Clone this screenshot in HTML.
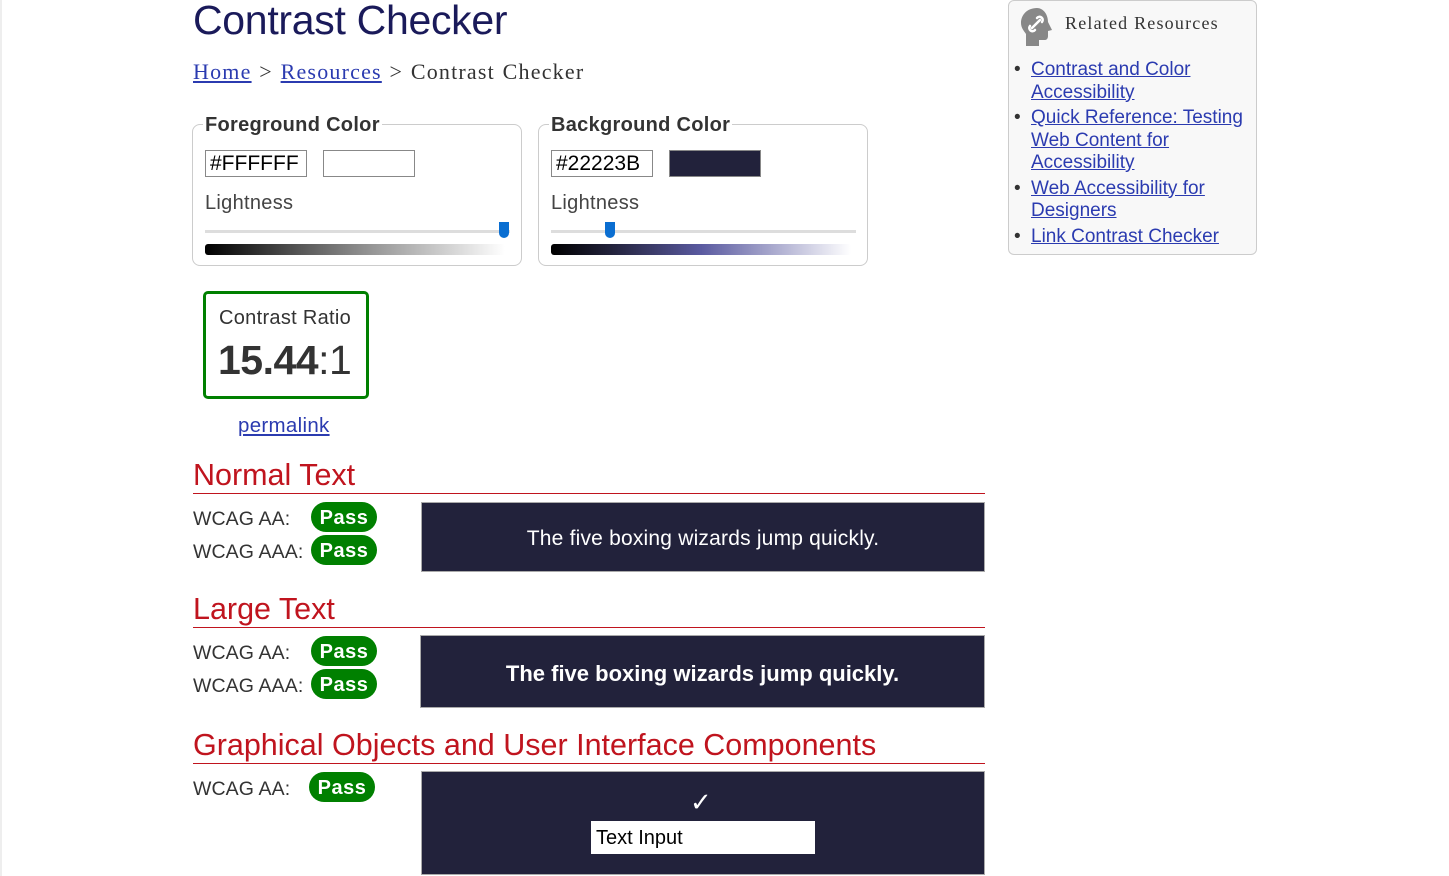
<!DOCTYPE html>
<html><head><meta charset="utf-8"><style>
*{box-sizing:border-box;margin:0;padding:0}
body{width:1449px;height:876px;overflow:hidden;background:#fff;font-family:"Liberation Sans",sans-serif;position:relative;color:#333}
.a{position:absolute}
a{color:#2b3bb0;text-decoration:underline}
.edge{left:0;top:0;width:2px;height:876px;background:#eee}
h1{position:absolute;left:193px;top:-3px;font-weight:normal;font-size:41px;color:#1a1a5a;letter-spacing:-0.3px}
.crumb{left:193px;top:59px;font-family:"Liberation Serif",serif;font-size:22px;color:#333;letter-spacing:1.2px;word-spacing:1px}
.fs{border:1px solid #ccc;border-radius:8px;width:330px;height:142px;top:124px}
.leg{font-weight:bold;font-size:20px;color:#333;background:#fff;padding:0 2px;top:114px;letter-spacing:0.3px}
.inp{border:1px solid #888;height:27px;font-size:21px;color:#000;padding-left:4px;line-height:25px}
.lt{font-size:20px;color:#444;letter-spacing:0.3px}
.track{height:3px;background:#ddd}
.thumb{width:10px;height:16px;background:#0a6ed1;border-radius:0 0 5px 5px}
.grad{height:11px;border-radius:3px}
h2{position:absolute;left:193px;font-weight:normal;font-size:30.5px;color:#c0141e;width:792px;border-bottom:1px solid #c0141e;line-height:36px;letter-spacing:0px}
.w{left:193px;font-size:19.5px;color:#333;letter-spacing:0.1px}
.pass{background:#008000;color:#fff;font-weight:bold;font-size:20px;border-radius:15px;width:66px;height:30px;line-height:32px;text-align:center;letter-spacing:0.5px}
.demo{background:#22223b;color:#fff;border:1px solid #aaa;text-align:center}
</style></head><body>
<div class="a edge"></div>
<h1>Contrast Checker</h1>
<div class="a crumb"><a href="#">Home</a> &gt; <a href="#">Resources</a> &gt; Contrast Checker</div>

<div class="a fs" style="left:192px"></div>
<div class="a leg" style="left:203px">Foreground Color</div>
<div class="a inp" style="left:205px;top:150px;width:102px">#FFFFFF</div>
<div class="a inp" style="left:323px;top:150px;width:92px;background:#fff"></div>
<div class="a lt" style="left:205px;top:192px">Lightness</div>
<div class="a track" style="left:205px;top:230px;width:305px"></div>
<div class="a thumb" style="left:499px;top:222px"></div>
<div class="a grad" style="left:205px;top:244px;width:300px;background:linear-gradient(90deg,#000,#888 50%,#fff)"></div>

<div class="a fs" style="left:538px"></div>
<div class="a leg" style="left:549px">Background Color</div>
<div class="a inp" style="left:551px;top:150px;width:102px">#22223B</div>
<div class="a inp" style="left:669px;top:150px;width:92px;background:#22223b"></div>
<div class="a lt" style="left:551px;top:192px">Lightness</div>
<div class="a track" style="left:551px;top:230px;width:305px"></div>
<div class="a thumb" style="left:605px;top:222px"></div>
<div class="a grad" style="left:551px;top:244px;width:300px;background:linear-gradient(90deg,#000,#22223b 20%,#5a5aa0 50%,#fff)"></div>

<div class="a" style="left:203px;top:291px;width:166px;height:108px;border:3px solid #008000;border-radius:5px"></div>
<div class="a" style="left:219px;top:307px;font-size:20px;color:#333;letter-spacing:0.3px">Contrast Ratio</div>
<div class="a" style="left:218px;top:337px;font-size:41px;color:#333;letter-spacing:-0.5px"><b>15.44</b>:1</div>
<div class="a" style="left:238px;top:414px;font-size:20.5px;letter-spacing:0.3px"><a href="#">permalink</a></div>

<h2 style="top:457px">Normal Text</h2>
<div class="a w" style="top:508px">WCAG AA:</div>
<div class="a pass" style="left:311px;top:502px">Pass</div>
<div class="a w" style="top:541px">WCAG AAA:</div>
<div class="a pass" style="left:311px;top:535px">Pass</div>
<div class="a demo" style="left:421px;top:502px;width:564px;height:70px;line-height:72px;font-size:21px;letter-spacing:0.2px">The five boxing wizards jump quickly.</div>

<h2 style="top:591px">Large Text</h2>
<div class="a w" style="top:642px">WCAG AA:</div>
<div class="a pass" style="left:311px;top:636px">Pass</div>
<div class="a w" style="top:675px">WCAG AAA:</div>
<div class="a pass" style="left:311px;top:669px">Pass</div>
<div class="a demo" style="left:420px;top:635px;width:565px;height:73px;line-height:75px;font-size:22px;font-weight:bold;letter-spacing:0px">The five boxing wizards jump quickly.</div>

<h2 style="top:727px">Graphical Objects and User Interface Components</h2>
<div class="a w" style="top:778px">WCAG AA:</div>
<div class="a pass" style="left:309px;top:772px">Pass</div>
<div class="a demo" style="left:421px;top:771px;width:564px;height:104px"></div>
<div class="a" style="left:690px;top:787px;color:#fff;font-size:26px">✓</div>
<div class="a" style="left:591px;top:821px;width:224px;height:33px;background:#fff;color:#000;font-size:20px;padding-left:5px;line-height:35px">Text Input</div>

<div class="a" style="left:1008px;top:0;width:249px;height:255px;border:1px solid #ccc;border-radius:6px;background:#f8f8f8"></div>
<svg class="a" style="left:1019px;top:6px" width="36" height="42" viewBox="0 0 36 42"><path d="M18 2C8 2 2 9 2 17c0 5 3 8 5 11v12h13v-6h6c2 0 3-2 3-4v-5l4-1-4-8C29 8 24 2 18 2z" fill="#888"/><path d="M13 22l8-8M11 20a3 3 0 0 0 5 4M18 12a3 3 0 0 1 5 4" stroke="#fff" stroke-width="2.5" fill="none" stroke-linecap="round"/></svg>
<div class="a" style="left:1065px;top:13px;font-family:'Liberation Serif',serif;font-size:18px;color:#333;letter-spacing:1.2px">Related Resources</div>
<div class="a" style="left:1014px;top:59px;font-size:19px;line-height:22.5px;letter-spacing:0px">
<div style="position:relative;padding-left:17px"><span style="position:absolute;left:0;top:0">•</span><a href="#">Contrast and Color<br>Accessibility</a></div>
<div style="position:relative;padding-left:17px;margin-top:3px"><span style="position:absolute;left:0;top:0">•</span><a href="#">Quick Reference: Testing<br>Web Content for<br>Accessibility</a></div>
<div style="position:relative;padding-left:17px;margin-top:3px"><span style="position:absolute;left:0;top:0">•</span><a href="#">Web Accessibility for<br>Designers</a></div>
<div style="position:relative;padding-left:17px;margin-top:3px"><span style="position:absolute;left:0;top:0">•</span><a href="#">Link Contrast Checker</a></div>
</div>
</body></html>
